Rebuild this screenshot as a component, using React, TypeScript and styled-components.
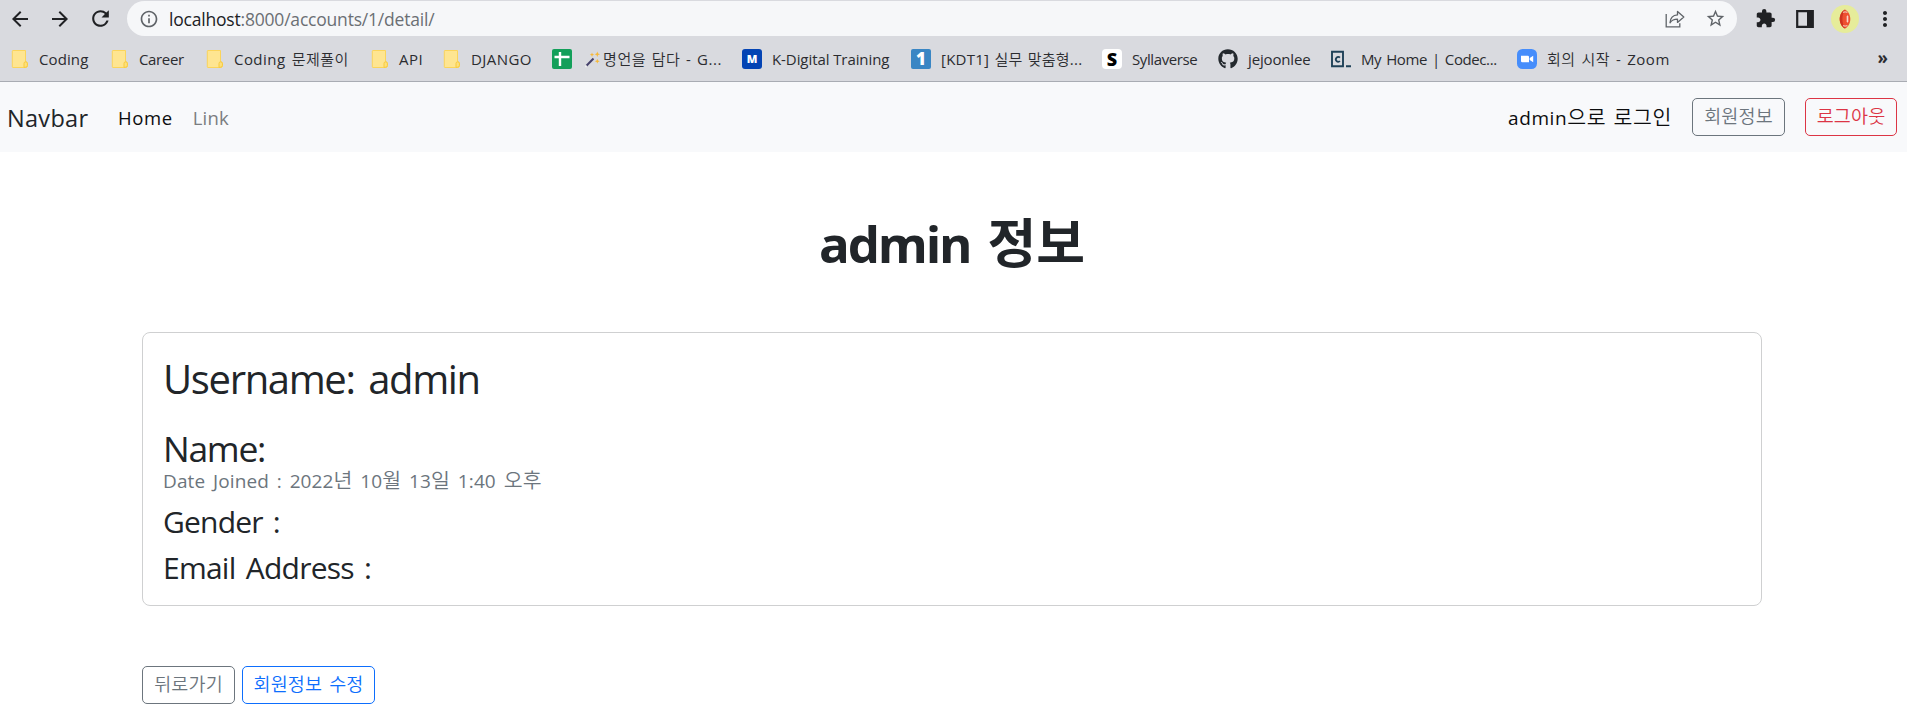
import React from "react";
import styled, { createGlobalStyle } from "styled-components";
import {
  MdArrowBack,
  MdArrowForward,
  MdExtension,
  MdInfoOutline,
  MdMoreVert,
  MdRefresh,
  MdStarBorder,
} from "react-icons/md";
import { FaGithub } from "react-icons/fa";

const GlobalStyle = createGlobalStyle`
  * { box-sizing: border-box; }
  body {
    margin: 0;
    background: #fff;
    color: #212529;
    font-family: "Open Sans", "Noto Sans CJK KR", sans-serif;
    font-weight: 400;
    overflow: hidden;
  }
`;

/* Browser chrome */

const Chrome = styled.header`
  height: 82px;
  background: #d9dadf;
  border-bottom: 1px solid #a9acb3;
`;

const Toolbar = styled.div`
  display: flex;
  align-items: center;
  height: 36px;
  padding: 1px 2px 0 0;
`;

const ToolButton = styled.span`
  display: flex;
  align-items: center;
  justify-content: center;
  width: 40px;
  height: 35px;
  color: #202124;
`;

const AddressBar = styled.div`
  display: flex;
  align-items: center;
  flex: 1;
  height: 35px;
  margin: 0 8px 0 7px;
  padding: 0 2px 0 12px;
  border-radius: 18px;
  background: #f6f7f9;
  color: #5f6368;
`;

const Url = styled.span`
  flex: 1;
  margin-left: 10px;
  font-size: 17.5px;
  line-height: 34px;
  letter-spacing: -0.2px;
  color: #6b6f74;
  b {
    font-weight: 400;
    color: #202124;
  }
`;

const AddressAction = styled.span`
  display: flex;
  align-items: center;
  justify-content: center;
  width: 40px;
`;

const Avatar = styled.span`
  display: flex;
  align-items: center;
  justify-content: center;
  width: 28px;
  height: 28px;
  border-radius: 50%;
  background: #e6ec9a;
`;

const Bookmarks = styled.nav`
  display: flex;
  align-items: center;
  height: 45px;
  padding: 1px 19px 0 10px;
  color: #2b2c30;
`;

const Bookmark = styled.span<{ $width: number }>`
  display: flex;
  align-items: center;
  width: ${(p) => p.$width}px;
  height: 24px;
`;

const BookmarkLabel = styled.span<{ $ls: number; $ws: number; $gap: number }>`
  margin-left: ${(p) => p.$gap}px;
  padding-bottom: 1px;
  font-size: 15px;
  line-height: 22px;
  letter-spacing: ${(p) => p.$ls}px;
  word-spacing: ${(p) => p.$ws}px;
  white-space: nowrap;
`;

const WandSlot = styled.span`
  display: flex;
  margin-left: 13px;
`;

const Tile = styled.span<{ $bg: string; $fg: string; $radius: number; $size: number }>`
  display: flex;
  align-items: center;
  justify-content: center;
  width: 20px;
  height: 20px;
  border-radius: ${(p) => p.$radius}px;
  background: ${(p) => p.$bg};
  color: ${(p) => p.$fg};
  font-size: ${(p) => p.$size}px;
  font-weight: 800;
  line-height: 20px;
`;

const Overflow = styled.span`
  margin-left: auto;
  font-size: 17px;
  font-weight: 700;
  line-height: 20px;
  padding-bottom: 2px;
`;

const FolderIcon = () => (
  <svg width="20" height="20" viewBox="0 0 20 20">
    <path d="M3 1.500h12.500v11.200q2 .2 2 2.300v1.500q0 2-2 2H3q-.7 0-.7-.7V2.200q0-.7.7-.7z" fill="#fee591" stroke="#fbd45a" />
    <path d="M14 18.300v-3.800q0-1.700 1.700-1.700t1.700 1.700v1.800q0 2-2.200 2z" fill="#fde07c" stroke="#f8ca3c" />
  </svg>
);

const SheetsIcon = () => (
  <svg width="20" height="20" viewBox="0 0 20 20">
    <rect width="20" height="20" rx="2" fill="#139f5a" />
    <path d="M8 3v14M2.500 8h15" stroke="#fff" strokeWidth="2.400" fill="none" />
  </svg>
);

const WandIcon = () => (
  <svg width="15" height="17" viewBox="0 0 15 17">
    <path d="M1.200 15L8.500 7.500" stroke="#45406b" strokeWidth="2" />
    <path d="M.2 16L1.600 14.500" stroke="#eee" strokeWidth="2" />
    <path
      d="M12.300 .5l.8 2 1.900.8-1.900.8-.8 2-.8-2-1.900-.8 1.900-.8zM7 1.500l.6 1.600 1.600.6-1.600.6L7 5.900l-.6-1.600-1.600-.6 1.600-.6zM12.300 7.800l.7 1.700 1.700.7-1.700.7-.7 1.700-.7-1.700-1.700-.7 1.700-.7z"
      fill="#f7b93a"
    />
  </svg>
);

const CodecademyIcon = () => (
  <svg width="20" height="20" viewBox="0 0 20 20">
    <path d="M1 2.800h11v14.400H1zM15 17.200h5" fill="none" stroke="#1f4158" strokeWidth="1.900" />
    <path d="M8.900 8.600A2.300 2.500 0 1 0 8.900 12" fill="none" stroke="#1f4158" strokeWidth="1.800" />
  </svg>
);

const ZoomIcon = () => (
  <svg width="20" height="20" viewBox="0 0 20 20">
    <rect width="20" height="20" rx="5.500" fill="#468dfb" />
    <path d="M4 6.700h6.800q1.200 0 1.200 1.200v5.400H5.200Q4 13.300 4 12.100zM12.700 8.900L16.200 6.700v6.600l-3.500-2.200z" fill="#fff" />
  </svg>
);

const ShareIcon = () => (
  <svg width="20" height="18" viewBox="0 0 20 18" fill="none" stroke="#5f6368" strokeWidth="1.300">
    <path d="M1.200 4v12.800h13.600v-3.600" />
    <path d="M5 12.800C5.300 7.800 8 5.200 12.500 4.900V1.400L18.800 7l-6.300 5.400V9.200C9 9.200 6.800 10.200 5 12.800z" strokeLinejoin="round" />
  </svg>
);

const SidePanelIcon = () => (
  <svg width="18" height="18" viewBox="0 0 18 18">
    <path d="M1.200 1.200h15.600v15.600H1.200z" fill="none" stroke="#202124" strokeWidth="2.200" />
    <path d="M11 1h6v16h-6z" fill="#202124" />
  </svg>
);

const FootballIcon = () => (
  <svg width="12" height="20" viewBox="0 0 12 20">
    <path d="M6 .4C9 2 11.300 5.500 11.300 10S9 18 6 19.600C3 18 .7 14.500.7 10S3 2 6 .4z" fill="#ee5030" />
    <path d="M6 .4C3 2 .7 5.500.7 10S3 18 6 19.600C4 16 3.400 13 3.400 10S4 4 6 .4z" fill="#cf3420" />
    <path d="M4 3.300q2-.8 4.400 0M4 16.700q2 .8 4.400 0" stroke="#f6d9cf" strokeWidth="1" fill="none" />
    <path d="M8.500 6.500v7M7.300 8h2.400M7.300 10h2.400M7.300 12h2.400" stroke="#fbe6df" strokeWidth=".8" />
  </svg>
);

type Item = { icon: React.ReactNode; label: string; width: number; ls: number; ws?: number; gap?: number; wand?: boolean };

const bookmarks: Item[] = [
  { icon: <FolderIcon />, label: "Coding", width: 100, ls: 0.1, gap: 9 },
  { icon: <FolderIcon />, label: "Career", width: 95, ls: -0.35, gap: 9 },
  { icon: <FolderIcon />, label: "Coding 문제풀이", width: 165, ls: 0.45, ws: 2, gap: 9 },
  { icon: <FolderIcon />, label: "API", width: 72, ls: 0.45, gap: 9 },
  { icon: <FolderIcon />, label: "DJANGO", width: 110, ls: 0.45, gap: 9 },
  { icon: <SheetsIcon />, label: "명언을 담다 - G...", width: 190, ls: 0.6, ws: 1, gap: 3, wand: true },
  { icon: <Tile $bg="#0444b4" $fg="#fff" $radius={3} $size={11}>M</Tile>, label: "K-Digital Training", width: 169, ls: -0.08 },
  { icon: <Tile $bg="#3a86c4" $fg="#fff" $radius={2} $size={17}>1</Tile>, label: "[KDT1] 실무 맞춤형...", width: 191, ls: 0.25, ws: 1 },
  { icon: <Tile $bg="#fff" $fg="#000" $radius={4} $size={18}>S</Tile>, label: "Syllaverse", width: 116, ls: -0.4 },
  { icon: <FaGithub size={20} color="#24292e" />, label: "jejoonlee", width: 113, ls: -0.15 },
  { icon: <CodecademyIcon />, label: "My Home | Codec...", width: 186, ls: -0.4, ws: 1.5 },
  { icon: <ZoomIcon />, label: "회의 시작 - Zoom", width: 160, ls: 0.5, ws: 1.5 },
];

/* Hangul is set one step lighter than the Latin text beside it. */
const Hangul = styled.span<{ $scale: number }>`
  font-size: ${(p) => p.$scale}em;
  font-weight: 350;
  line-height: 0;
`;

const Mixed = ({ text, scale = 1 }: { text: string; scale?: number }) => (
  <>
    {text.split(/([가-힣]+)/).map((part, i) => (i % 2 ? <Hangul key={i} $scale={scale}>{part}</Hangul> : part))}
  </>
);

/* Page */

const Navbar = styled.nav`
  display: flex;
  align-items: center;
  height: 70px;
  padding: 0 10px 0 7px;
  background: #f8f9fb;
`;

const Brand = styled.a`
  width: 111px;
  padding-top: 2px;
  font-size: 23.5px;
  line-height: 36px;
  letter-spacing: 0.3px;
`;

const NavLink = styled.a<{ $active?: boolean }>`
  margin-right: 20px;
  padding-top: 1px;
  font-size: 18.5px;
  line-height: 30px;
  letter-spacing: ${(p) => (p.$active ? 0.6 : 0.2)}px;
  color: ${(p) => (p.$active ? "#0c0d0e" : "#7b7d80")};
`;

const LoginState = styled.span`
  margin: 0 20px 0 auto;
  padding-top: 1px;
  font-size: 19px;
  line-height: 30px;
  letter-spacing: 0.6px;
  color: #0c0d0e;
`;

const Korean = styled.span`
  font-size: 20.5px;
  font-weight: 350;
  word-spacing: 1.5px;
`;

const tones = { secondary: "#6c757d", danger: "#dc3545", primary: "#0d6efd" };

const Button = styled.button<{ $tone: keyof typeof tones; $width: number }>`
  width: ${(p) => p.$width}px;
  height: 38px;
  padding: 0 0 2px;
  border: 1px solid ${(p) => tones[p.$tone]};
  border-radius: 5px;
  background: transparent;
  color: ${(p) => tones[p.$tone]};
  font-family: inherit;
  font-size: 18.5px;
  font-weight: 350;
  line-height: 34px;
  letter-spacing: 0.15px;
  word-spacing: 2px;
  white-space: nowrap;
`;

const NavButtons = styled.div`
  display: flex;
  gap: 20px;
`;

const Container = styled.main`
  width: 1620px;
  margin: 0 0 0 142px;
`;

const Title = styled.h1`
  height: 61px;
  margin: 60px 0 59px;
  font-size: 53px;
  font-weight: 700;
  line-height: 61px;
  text-align: center;
`;

const Latin = styled.span`
  font-size: 51px;
  letter-spacing: -2.2px;
  word-spacing: 6px;
`;

const Card = styled.section`
  height: 274px;
  padding: 22px 21px 0 20px;
  border: 1px solid #cfd0d1;
  border-radius: 8px;
`;

const Line = styled.p<{ $size: number; $height: number; $ls: number; $ws?: number; $top?: number; $muted?: boolean }>`
  margin: ${(p) => p.$top ?? 0}px 0 0;
  font-size: ${(p) => p.$size}px;
  line-height: ${(p) => p.$height}px;
  letter-spacing: ${(p) => p.$ls}px;
  word-spacing: ${(p) => p.$ws ?? 0}px;
  color: ${(p) => (p.$muted ? "#6c757d" : "#212529")};
`;

const Actions = styled.div`
  display: flex;
  gap: 7px;
  margin-top: 60px;
`;

export default function App() {
  return (
    <>
      <GlobalStyle />
      <Chrome>
        <Toolbar>
          <ToolButton><MdArrowBack size={24} /></ToolButton>
          <ToolButton><MdArrowForward size={24} /></ToolButton>
          <ToolButton><MdRefresh size={25} /></ToolButton>
          <AddressBar>
            <MdInfoOutline size={20} />
            <Url><b>localhost</b>:8000/accounts/1/detail/</Url>
            <AddressAction><ShareIcon /></AddressAction>
            <AddressAction><MdStarBorder size={21} /></AddressAction>
          </AddressBar>
          <ToolButton><MdExtension size={21} /></ToolButton>
          <ToolButton><SidePanelIcon /></ToolButton>
          <ToolButton><Avatar><FootballIcon /></Avatar></ToolButton>
          <ToolButton><MdMoreVert size={24} /></ToolButton>
        </Toolbar>
        <Bookmarks>
          {bookmarks.map((b) => (
            <Bookmark key={b.label} $width={b.width}>
              {b.icon}
              {b.wand && <WandSlot><WandIcon /></WandSlot>}
              <BookmarkLabel $ls={b.ls} $ws={b.ws ?? 0} $gap={b.gap ?? 10}><Mixed text={b.label} /></BookmarkLabel>
            </Bookmark>
          ))}
          <Overflow>»</Overflow>
        </Bookmarks>
      </Chrome>
      <Navbar>
        <Brand>Navbar</Brand>
        <NavLink $active>Home</NavLink>
        <NavLink>Link</NavLink>
        <LoginState>admin<Korean>으로 로그인</Korean></LoginState>
        <NavButtons>
          <Button $tone="secondary" $width={93}>회원정보</Button>
          <Button $tone="danger" $width={92}>로그아웃</Button>
        </NavButtons>
      </Navbar>
      <Container>
        <Title><Latin>admin </Latin>정보</Title>
        <Card>
          <Line $size={40} $height={48} $ls={-1.35} $ws={4.5}>Username: admin</Line>
          <Line $size={35.5} $height={43} $ls={-1.3} $top={24}>Name:</Line>
          <Line $size={19} $height={23} $ls={0.1} $ws={2.8} $muted><Mixed scale={1.08} text="Date Joined : 2022년 10월 13일 1:40 오후" /></Line>
          <Line $size={30} $height={36} $ls={-0.8} $ws={3} $top={11}>Gender :</Line>
          <Line $size={30} $height={36} $ls={-0.75} $ws={3.2} $top={10}>Email Address :</Line>
        </Card>
        <Actions>
          <Button $tone="secondary" $width={93}>뒤로가기</Button>
          <Button $tone="primary" $width={133}>회원정보 수정</Button>
        </Actions>
      </Container>
    </>
  );
}
